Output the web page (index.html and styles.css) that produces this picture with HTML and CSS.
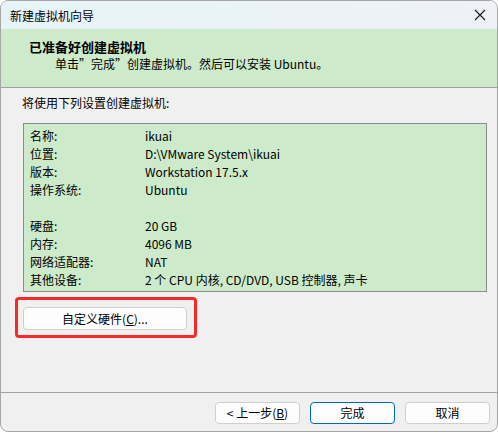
FILE: index.html
```html
<!DOCTYPE html>
<html lang="zh-CN">
<head>
  <meta charset="UTF-8">
  <title>新建虚拟机向导</title>
  <link rel="stylesheet" href="styles.css">
</head>
<body>
  <div class="window">
    <div class="titlebar">
      <span class="title">新建虚拟机向导</span>
      <svg class="close" width="12" height="12" viewBox="0 0 12 12">
        <path d="M1 1 L11 11 M11 1 L1 11" stroke="#1a1a1a" stroke-width="1.1" fill="none"/>
      </svg>
    </div>

    <div class="header">
      <div class="header-title">已准备好创建虚拟机</div>
      <div class="header-sub">单击”完成”创建虚拟机。然后可以安装 Ubuntu。</div>
    </div>

    <div class="content">
      <div class="intro">将使用下列设置创建虚拟机:</div>

      <div class="summary">
        <span>名称:</span><span>ikuai</span>
        <span>位置:</span><span>D:\VMware System\ikuai</span>
        <span>版本:</span><span>Workstation 17.5.x</span>
        <span>操作系统:</span><span>Ubuntu</span>
        <span class="blank"></span><span class="blank"></span>
        <span>硬盘:</span><span>20 GB</span>
        <span>内存:</span><span>4096 MB</span>
        <span>网络适配器:</span><span>NAT</span>
        <span>其他设备:</span><span>2 个 CPU 内核, CD/DVD, USB 控制器, 声卡</span>
      </div>

      <div class="highlight">
        <button class="btn btn-wide">自定义硬件(<u>C</u>)...</button>
      </div>
    </div>

    <div class="footer">
      <button class="btn">&lt; 上一步(<u>B</u>)</button>
      <button class="btn btn-primary">完成</button>
      <button class="btn">取消</button>
    </div>
  </div>
</body>
</html>
```

FILE: styles.css
```css
* {
  box-sizing: border-box;
  font-family: "Noto Sans CJK SC", "Noto Sans", sans-serif;
}
body {
  margin: 0;
  background: #ffffff;
  font-size: 12px;
  color: #000;
}
.window {
  width: 498px;
  height: 432px;
  border: 1px solid #a6a6a6;
  border-radius: 8px;
  overflow: hidden;
  display: flex;
  flex-direction: column;
  background: #f0f0f0;
}
.titlebar {
  height: 28px;
  flex: none;
  display: flex;
  align-items: center;
  justify-content: space-between;
  padding: 0 9px 0 9px;
  background: linear-gradient(to right, #e6f4f8, #eef1f6);
}
.title {
  font-size: 12px;
  line-height: 16px;
  margin-top: 1px;
}
.close {
  margin-right: 2px;
}
.header {
  height: 59px;
  flex: none;
  background: #cdebca;
  border-bottom: 1px solid #a0a0a0;
  padding: 9px 0 0 28px;
}
.header-title {
  font-size: 13px;
  font-weight: bold;
  line-height: 18px;
}
.header-sub {
  margin-left: 26px;
  line-height: 16px;
}
.content {
  flex: 1;
  border-bottom: 1px solid #a0a0a0;
  padding-top: 6px;
}
.intro {
  line-height: 18px;
  margin-left: 21px;
}
.summary {
  margin: 11px 0 0 22px;
  width: 464px;
  height: 169px;
  background: #cdebca;
  border: 1px solid #8c8c8c;
  padding: 3px 0 0 6px;
  display: grid;
  grid-template-columns: 115px 1fr;
  grid-auto-rows: 18px;
  align-items: center;
}
.summary span {
  line-height: 18px;
  white-space: nowrap;
}
.highlight {
  margin: 5px 0 0 14px;
  width: 182px;
  height: 41px;
  border: 3px solid #f52a2a;
  border-radius: 4px;
  padding: 7px 0 0 5px;
}
.btn {
  width: 85px;
  height: 22px;
  border: 1px solid #cfcfcf;
  border-radius: 4px;
  background: #fdfdfd;
  font-size: 12px;
  line-height: 18px;
  padding: 0;
  color: #000;
}
.btn u {
  text-underline-offset: 1px;
}
.btn-wide {
  width: 164px;
  height: 23px;
}
.btn-primary {
  border-color: #0067c0;
}
.footer {
  height: 38px;
  flex: none;
  display: flex;
  justify-content: flex-end;
  gap: 10px;
  padding: 9px 7px 0 0;
}
```
